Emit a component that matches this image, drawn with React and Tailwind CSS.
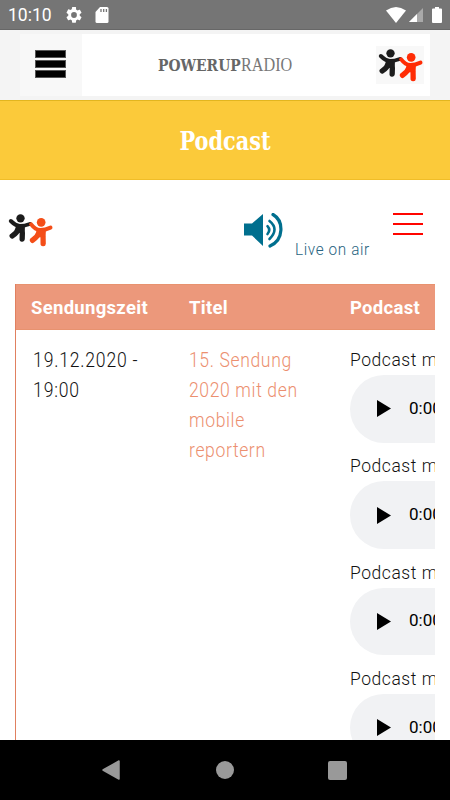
import React from 'react';

const podcasts = [1, 2, 3, 4];

function Figures({ orange, className }) {
  return (
    <svg viewBox="19 62 143 114" className={className} fill="none" strokeLinecap="round" strokeLinejoin="round">
      <g stroke="#1c1c1c" strokeWidth="13">
        <circle cx="62" cy="84" r="12.5" fill="#1c1c1c" stroke="none" />
        <path d="M33 92Q47 106 60 107Q74 107 90 101" strokeWidth="12" />
        <path d="M57 112Q52 128 37 137M65 110Q69 128 67 146" strokeWidth="16" />
        <path d="M50 106H75L72 128L61 126L48 130Z" fill="#1c1c1c" strokeWidth="2" />
      </g>
      <g stroke={orange} strokeWidth="13">
        <circle cx="124" cy="96" r="13" fill={orange} stroke="none" />
        <path d="M94 102Q106 118 121 119Q136 119 152 112" strokeWidth="12" />
        <path d="M119 124Q113 140 98 150M127 122Q131 142 130 160" strokeWidth="16" />
        <path d="M112 118H138L135 140L123 139L110 142Z" fill={orange} strokeWidth="2" />
      </g>
    </svg>
  );
}

export default function App() {
  return (
    <div className="flex h-[800px] w-[450px] flex-col overflow-hidden bg-white font-['Roboto',sans-serif]">
      {/* Status bar */}
      <div className="flex h-[30px] shrink-0 items-center border-b border-[#676767] bg-[#757575] pt-px pl-2 text-white">
        <span className="w-[58px] pt-0.5 text-[17.500px] leading-none">10:10</span>
        <svg viewBox="2 2 20 20" className="h-4 w-4" fill="currentColor">
          <path d="M19.14 12.94c.04-.3.06-.61.06-.94s-.02-.64-.07-.94l2.03-1.58a.5.5 0 0 0 .12-.61l-1.92-3.32a.49.49 0 0 0-.59-.22l-2.39.96a7 7 0 0 0-1.62-.94l-.36-2.54A.48.48 0 0 0 13.92 2h-3.84a.47.47 0 0 0-.47.41l-.36 2.54c-.59.24-1.13.57-1.62.94l-2.39-.96a.48.48 0 0 0-.59.22L2.74 8.87a.47.47 0 0 0 .12.61l2.03 1.58a7.6 7.6 0 0 0 0 1.88l-2.03 1.58a.5.5 0 0 0-.12.61l1.92 3.32c.12.22.37.29.59.22l2.39-.96c.5.38 1.03.7 1.62.94l.36 2.54c.05.24.24.41.48.41h3.84c.24 0 .44-.17.47-.41l.36-2.54a7 7 0 0 0 1.62-.94l2.39.96c.22.08.47 0 .59-.22l1.92-3.32a.47.47 0 0 0-.12-.61zM12 15.6a3.6 3.6 0 1 1 0-7.2 3.6 3.6 0 0 1 0 7.2" />
        </svg>
        <svg viewBox="0 0 14 16" className="ml-[13px] h-4 w-3.5" fill="currentColor">
          <path d="M5 0h7a1.5 1.5 0 0 1 1.5 1.5v13A1.5 1.5 0 0 1 12 16H2a1.5 1.5 0 0 1-1.5-1.5V5z" />
          <path d="M6 2v3M8.7 2v3M11.4 2v3" stroke="#757575" strokeWidth="1.3" />
        </svg>
        <svg viewBox="0 0 20 16" className="ml-auto h-4 w-5" fill="currentColor">
          <path d="M0 3.5Q10-3.5 20 3.5L10 16Z" />
        </svg>
        <svg viewBox="0 0 14 14" className="ml-[3px] h-3.5 w-3.5">
          <path d="M14 0V14H0Z" fill="#a9a9a9" />
          <path d="M8 6V14H0Z" fill="#fff" />
        </svg>
        <svg viewBox="0 0 10 16" className="mr-2 ml-[9.5px] h-4 w-2.5" fill="currentColor">
          <path d="M3 0h4v1.6h2q1 0 1 1V15q0 1-1 1H1q-1 0-1-1V2.600q0-1 1-1h2z" />
        </svg>
      </div>

      {/* App bar */}
      <header className="flex h-[70px] shrink-0 bg-[#f4f4f4] pt-1 pr-5 pb-1 pl-5">
        <button className="flex w-[62px] flex-col items-center justify-center gap-[2px] bg-[#f8f8f8] pr-0.5 pb-0.5">
          <span className="h-2 w-[31px] border border-[#555] bg-black" />
          <span className="h-2 w-[31px] border border-[#555] bg-black" />
          <span className="h-2 w-[31px] border border-[#555] bg-black" />
        </button>
        <div className="flex flex-1 items-center bg-white pl-[76px] text-[#666]">
          <div className="flex w-[134px] items-baseline whitespace-nowrap">
            <b className="w-[83px]"><span className="inline-block origin-left scale-x-[0.88] font-['DejaVu_Serif_Condensed','DejaVu_Serif',serif] text-[17.500px]">POWERUP</span></b>
            <span className="inline-block w-[51px] origin-left scale-x-[0.83] font-['Liberation_Serif',serif] text-[19.500px] text-[#777]">RADIO</span>
          </div>
          <div className="mr-1.5 ml-auto bg-[#f8f8f8]">
            <Figures orange="#ff2c05" className="h-[38px] w-12" />
          </div>
        </div>
      </header>

      {/* Page title */}
      <div className="flex h-20 shrink-0 items-center justify-center border-t border-b border-t-[#e2b51f] border-b-[#f0bd28] bg-[#fbca3a] pt-[3px]">
        <h1 className="origin-center scale-x-[0.91] font-['DejaVu_Serif_Condensed','DejaVu_Serif',serif] text-[25.500px] leading-none font-bold text-white">Podcast</h1>
      </div>

      <main className="flex h-[560px] shrink-0 flex-col overflow-hidden">
        {/* Site navigation */}
        <nav className="flex h-[104px] shrink-0 items-start pt-[29px]">
          <Figures orange="#f44e18" className="mt-[1.500px] ml-[6px] h-[38px] w-12" />
          <a className="mt-1 ml-[190px] flex text-[#006f8e]">
            <svg viewBox="0 0 39 35" className="h-[35px] w-[39px]" fill="none" stroke="currentColor" strokeWidth="2.600" strokeLinecap="round">
              <path d="M0 10.500H8L19 1V33L8 22.500H0Z" fill="currentColor" stroke="none" />
              <path d="M23.500 13.200Q27 17 23.500 21" />
              <path d="M25.500 8Q35.500 16 25.500 26" />
              <path d="M29 1.500C40 8 40 27 26 33" strokeWidth="3.200" />
            </svg>
            <span className="mt-[26px] ml-[12px] w-[80px] origin-left scale-x-[0.9] text-[17px] leading-5 font-[350] tracking-[0.7px] whitespace-nowrap text-[#286481]">Live on air</span>
          </a>
          <button className="mt-[4px] mr-[27.500px] ml-auto flex w-[30px] flex-col gap-2">
            <span className="h-0.5 bg-[#ff0500]" />
            <span className="h-0.5 bg-[#ff0500]" />
            <span className="h-0.5 bg-[#ff0500]" />
          </button>
        </nav>

        {/* Broadcast table */}
        <div className="mx-[15px] flex-1 overflow-hidden border-l border-l-[#e08060]">
          <div className="-ml-px grid h-[46px] w-[500px] grid-cols-[173px_161px_1fr] items-center border border-[#e8926f] bg-[#ec987b] pt-[3px] text-[18.500px] font-bold tracking-[0.3px] text-white">
            <span className="pl-[15px]">Sendungszeit</span>
            <span>Titel</span>
            <span>Podcast</span>
          </div>
          <div className="grid w-[500px] grid-cols-[173px_161px_1fr] pt-[15px] text-[19.500px] leading-[30px] font-[350] text-[#111]">
            <div className="origin-left scale-x-[0.9] pt-px tracking-[0.9px]"><p className="pl-[19px]">19.12.2020 -<br />19:00</p></div>
            <div className="origin-left scale-x-[0.9] pt-px tracking-[0.7px] text-[#ec8f6f]">15. Sendung<br />2020 mit den<br />mobile<br />reportern</div>
            <div>
              {podcasts.map((id) => (
                <div key={id} className="h-[106.300px]">
                  <p className="origin-left scale-x-[0.92] text-[19px] tracking-[0.6px] whitespace-nowrap">Podcast mit</p>
                  <div className="flex h-[67.500px] w-[375px] items-center rounded-full bg-[#f1f2f4] pl-[27px] text-[17px] text-black">
                    <svg viewBox="0 0 14 17" className="h-[17px] w-3.5"><path d="M0 0L14 8.500L0 17Z" /></svg>
                    <span className="mb-0.5 ml-[18px] font-normal">0:00</span>
                  </div>
                </div>
              ))}
            </div>
          </div>
        </div>
      </main>

      {/* Android navigation */}
      <footer className="flex h-[60px] shrink-0 items-center bg-black">
        <svg viewBox="0 0 20 20" className="ml-[101px] h-5 w-5"><path d="M2 10L18 1V19Z" fill="#999" stroke="#999" strokeWidth="1.500" strokeLinejoin="round" /></svg>
        <span className="ml-[95px] h-[18px] w-[18px] rounded-full bg-[#999]" />
        <span className="ml-[94px] h-[19px] w-[19px] rounded-[2px] bg-[#999]" />
      </footer>
    </div>
  );
}
